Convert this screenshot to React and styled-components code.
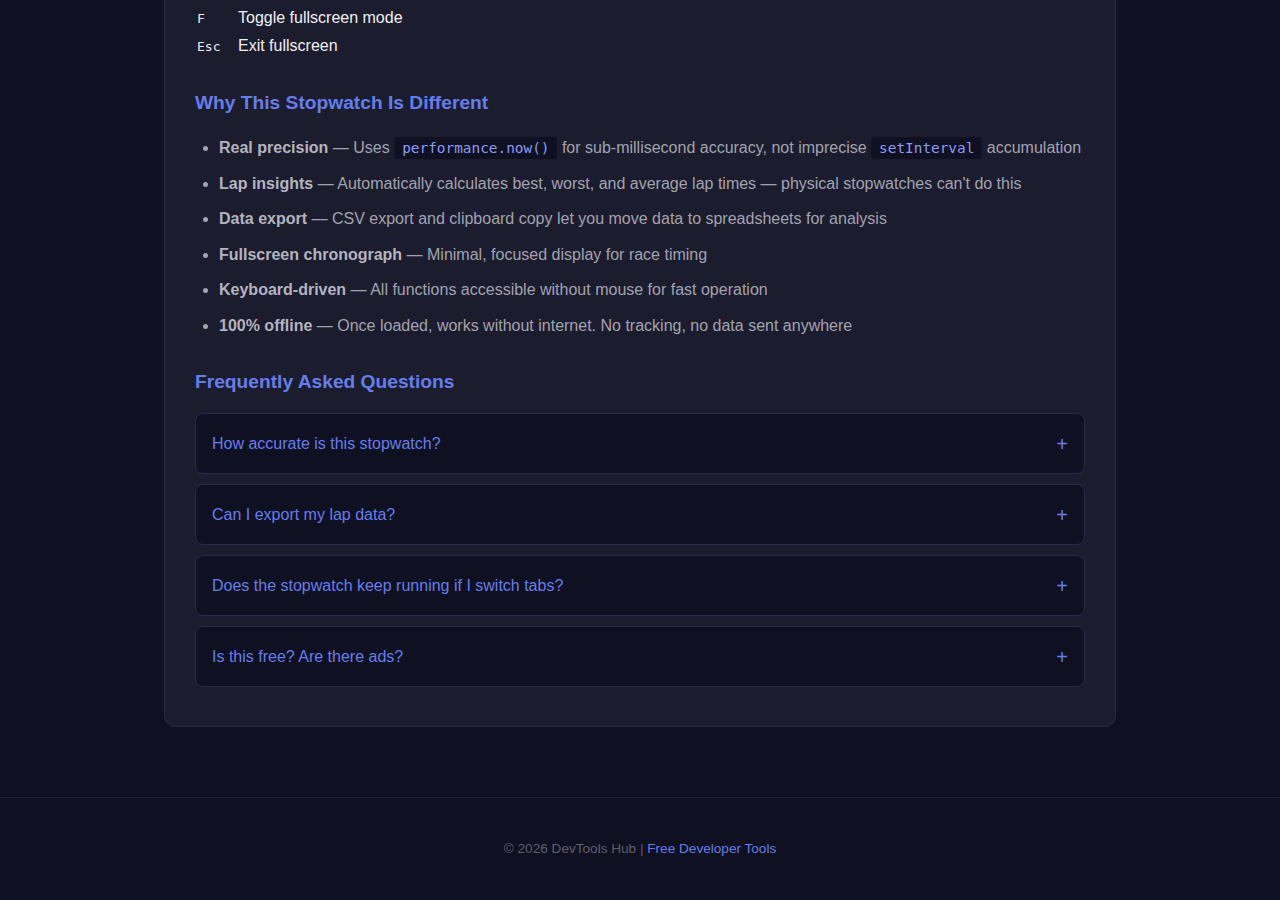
import React from "react";
import styled, { createGlobalStyle } from "styled-components";

const Global = createGlobalStyle`
  html, body { margin: 0; padding: 0; background: #0f1022; }
  body { font-family: "Liberation Sans", Arial, sans-serif; color: #e0e0e6; }
  * { box-sizing: border-box; }
`;

const Page = styled.div`
  min-height: 900px;
  display: flex;
  flex-direction: column;
`;

const Main = styled.main`
  width: 952px;
  margin: 0 auto 70px;
`;

const Card = styled.section`
  background: #1b1c2e;
  border: 1px solid #2a2b45;
  border-top: none;
  border-radius: 0 0 12px 12px;
  padding: 4px 30px 39px;
`;

const Shortcuts = styled.div`
  display: flex;
  flex-direction: column;
`;

const ShortcutRow = styled.div`
  display: flex;
  align-items: center;
  height: 28px;
`;

const Kbd = styled.kbd`
  width: 43px;
  padding-left: 2px;
  font-family: "DejaVu Sans Mono", monospace;
  font-size: 13px;
  color: #e8e8f0;
`;

const ShortcutText = styled.span`
  font-size: 16px;
  color: #f0f0f5;
`;

const Heading = styled.h2`
  margin: ${(p) => p.$top}px 0 0;
  font-size: 19.2px;
  line-height: 24px;
  font-weight: 700;
  color: #667eea;
`;

const List = styled.ul`
  margin: 20px 0 0;
  padding-left: 24px;
`;

const Item = styled.li`
  font-size: 16px;
  line-height: 25.6px;
  color: #a3a3b0;
  margin-bottom: 10px;
  &::marker { color: #a3a3b0; }
`;

const Strong = styled.strong`
  color: #b4b4be;
`;

const Code = styled.code`
  font-family: "DejaVu Sans Mono", monospace;
  font-size: 14.4px;
  line-height: 1;
  color: #8b9cf5;
  background: #0f1022;
  padding: 3px 8px;
  border-radius: 4px;
`;

const Faq = styled.div`
  margin-top: 19px;
  display: flex;
  flex-direction: column;
  gap: 10px;
`;

const FaqItem = styled.div`
  height: 61px;
  background: #0f1022;
  border: 1px solid #2a2b47;
  border-radius: 8px;
  padding: 2px 16px 0;
  display: flex;
  align-items: center;
  justify-content: space-between;
`;

const Question = styled.span`
  font-size: 16px;
  color: #667eea;
`;

const Plus = styled.span`
  font-size: 20px;
  font-weight: 300;
  color: #667eea;
  line-height: 1;
`;

const Footer = styled.footer`
  border-top: 1px solid #1f2036;
  padding: 43px 0 0;
  text-align: center;
  font-size: 13.6px;
  color: #5e5e6c;
`;

const FooterLink = styled.a`
  color: #667eea;
  text-decoration: none;
`;

const shortcuts = [
  ["F", "Toggle fullscreen mode"],
  ["Esc", "Exit fullscreen"],
];

const faqs = [
  "How accurate is this stopwatch?",
  "Can I export my lap data?",
  "Does the stopwatch keep running if I switch tabs?",
  "Is this free? Are there ads?",
];

export default function App() {
  return (
    <Page>
      <Global />
      <Main>
        <Card>
          <Shortcuts>
            {shortcuts.map(([k, t]) => (
              <ShortcutRow key={k}>
                <Kbd>{k}</Kbd>
                <ShortcutText>{t}</ShortcutText>
              </ShortcutRow>
            ))}
          </Shortcuts>

          <Heading $top={31}>Why This Stopwatch Is Different</Heading>
          <List>
            <Item>
              <Strong>Real precision</Strong> — Uses <Code>performance.now()</Code> for
              sub-millisecond accuracy, not imprecise <Code>setInterval</Code> accumulation
            </Item>
            <Item>
              <Strong>Lap insights</Strong> — Automatically calculates best, worst, and average
              lap times — physical stopwatches can't do this
            </Item>
            <Item>
              <Strong>Data export</Strong> — CSV export and clipboard copy let you move data to
              spreadsheets for analysis
            </Item>
            <Item>
              <Strong>Fullscreen chronograph</Strong> — Minimal, focused display for race timing
            </Item>
            <Item>
              <Strong>Keyboard-driven</Strong> — All functions accessible without mouse for fast
              operation
            </Item>
            <Item>
              <Strong>100% offline</Strong> — Once loaded, works without internet. No tracking,
              no data sent anywhere
            </Item>
          </List>

          <Heading $top={31}>Frequently Asked Questions</Heading>
          <Faq>
            {faqs.map((q) => (
              <FaqItem key={q}>
                <Question>{q}</Question>
                <Plus>+</Plus>
              </FaqItem>
            ))}
          </Faq>
        </Card>
      </Main>
      <Footer>
        © 2026 DevTools Hub | <FooterLink href="#">Free Developer Tools</FooterLink>
      </Footer>
    </Page>
  );
}
